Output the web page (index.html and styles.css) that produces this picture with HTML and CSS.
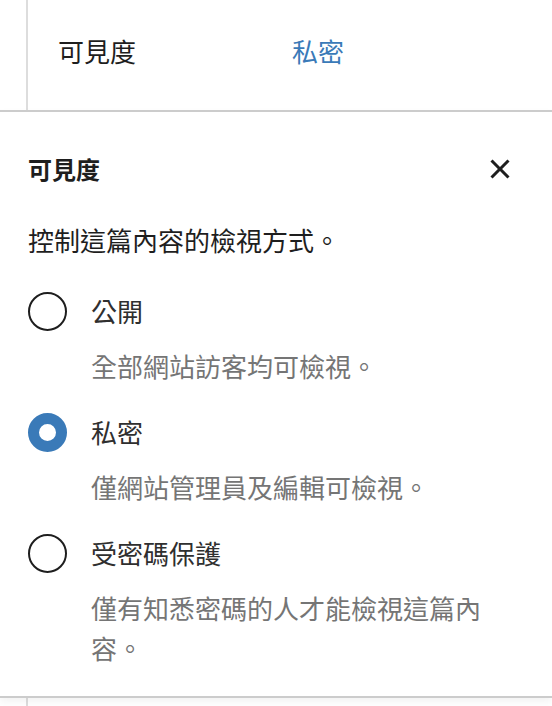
FILE: index.html
```html
<!DOCTYPE html>
<html lang="zh-Hant">
<head>
    <meta charset="UTF-8">
    <meta name="viewport" content="width=device-width, initial-scale=1.0">
    <title>可見度</title>
    <link rel="stylesheet" href="styles.css">
</head>
<body>
    <div class="panel">
        <div class="setting-row">
            <span class="setting-label">可見度</span>
            <span class="setting-value">私密</span>
        </div>
        <div class="setting-row">
            <span class="setting-label">URL</span>
            <span class="setting-value">/private-post</span>
        </div>
    </div>

    <!-- visibility popover, opened over the summary panel -->
    <div class="popover">
        <div class="popover-header">
            <h2 class="popover-title">可見度</h2>
            <button class="close-button" type="button" aria-label="關閉">
                <svg viewBox="0 0 24 24" width="48" height="48" aria-hidden="true">
                    <path d="M12 13.06l3.712 3.713 1.061-1.06L13.061 12l3.712-3.712-1.06-1.06L12 10.938 8.288 7.227l-1.061 1.06L10.939 12l-3.712 3.712 1.06 1.061L12 13.061z"></path>
                </svg>
            </button>
        </div>

        <p class="popover-intro">控制這篇內容的檢視方式。</p>

        <div class="options">
            <div class="option">
                <label class="option-row">
                    <span class="radio"></span>
                    <span class="option-label">公開</span>
                </label>
                <p class="option-help">全部網站訪客均可檢視。</p>
            </div>
            <div class="option">
                <label class="option-row">
                    <span class="radio checked"></span>
                    <span class="option-label">私密</span>
                </label>
                <p class="option-help">僅網站管理員及編輯可檢視。</p>
            </div>
            <div class="option">
                <label class="option-row">
                    <span class="radio"></span>
                    <span class="option-label">受密碼保護</span>
                </label>
                <p class="option-help">僅有知悉密碼的人才能檢視這篇內容。</p>
            </div>
        </div>
    </div>
</body>
</html>
```

FILE: styles.css
```css
body {
    margin: 0;
    background-color: #ffffff;
    color: #1e1e1e;
    font-family: "Noto Sans CJK TC", "Noto Sans", sans-serif;
    font-size: 26px;
}

.panel {
    margin-left: 26px;
    min-height: 100vh;
    border-left: 2px solid #dddddd;
    padding-top: 15px;
    padding-left: 30px;
    box-sizing: border-box;
    overflow: hidden;
}

.setting-row {
    display: flex;
    align-items: center;
    height: 70px;
}

.setting-label {
    width: 234px;
    flex-shrink: 0;
    color: #1e1e1e;
}

.setting-value {
    color: #3a7ab8;
    white-space: nowrap;
}

.popover {
    position: absolute;
    top: 110px;
    left: 0;
    right: 0;
    height: 588px;
    box-sizing: border-box;
    padding: 0 28px;
    background-color: #ffffff;
    border-top: 2px solid #cccccc;
    border-bottom: 2px solid #cccccc;
    box-shadow: 0 4px 8px rgba(0, 0, 0, 0.05);
}

.popover-header {
    display: flex;
    justify-content: space-between;
    align-items: center;
    height: 48px;
    margin-top: 33px;
}

.popover-title {
    margin: 0;
    font-size: 24px;
    font-weight: 700;
    line-height: 48px;
    color: #1e1e1e;
}

.close-button {
    width: 48px;
    height: 48px;
    padding: 0;
    border: 0;
    background: none;
    color: #1e1e1e;
}

.close-button svg {
    display: block;
    fill: currentColor;
}

.popover-intro {
    margin: 27px 0 0;
    line-height: 40px;
    color: #1e1e1e;
}

.options {
    display: flex;
    flex-direction: column;
    gap: 26px;
    margin-top: 31px;
}

.option-row {
    display: flex;
    align-items: center;
    gap: 24px;
    height: 40px;
}

.radio {
    width: 39px;
    height: 39px;
    box-sizing: border-box;
    border: 2px solid #1e1e1e;
    border-radius: 50%;
    flex-shrink: 0;
}

.radio.checked {
    border: 11.5px solid #3a7ab8;
    background-color: #ffffff;
}

.option-label {
    color: #2f2f2f;
    line-height: 40px;
}

.option-help {
    margin: 15px 0 0 63px;
    max-width: 400px;
    line-height: 40px;
    color: #757575;
}
```
